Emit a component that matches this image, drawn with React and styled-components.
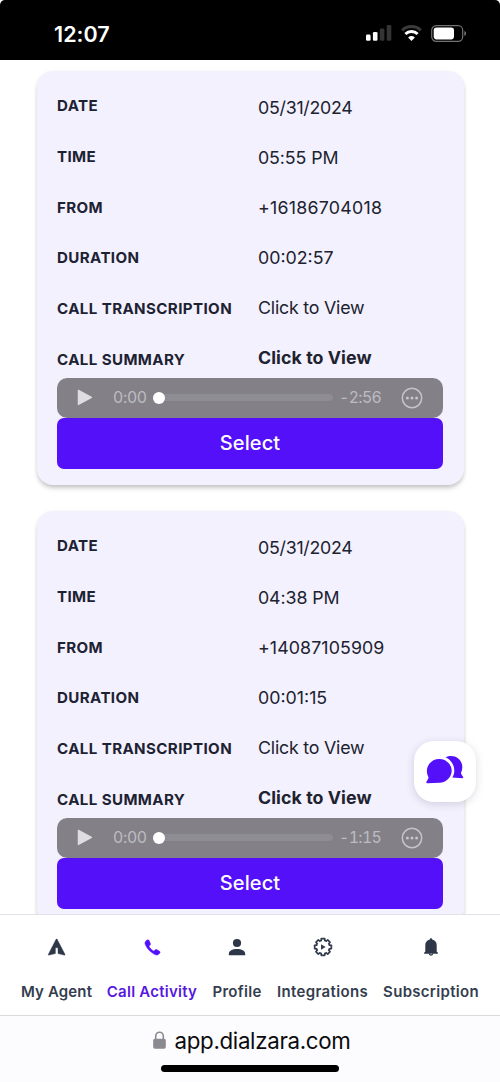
import React from 'react';
import styled, { createGlobalStyle } from 'styled-components';

const GlobalStyle = createGlobalStyle`
  * { box-sizing: border-box; }
  body { margin: 0; background: #fff; font-family: Inter, "Liberation Sans", sans-serif; }
  svg { display: block; overflow: visible; flex: none; }
`;

const Screen = styled.div`
  position: relative;
  width: 500px;
  height: 1082px;
  overflow: hidden;
  display: flex;
  flex-direction: column;
  background: #fff;
`;

const StatusBar = styled.header`
  flex: none;
  height: 60px;
  padding: 6px 33px 0 54px;
  display: flex;
  align-items: center;
  justify-content: space-between;
  background: #000;
  border-radius: 5px 5px 0 0;
  color: #fff;
`;

const Clock = styled.span`
  padding-top: 1px;
  font-size: 21.5px;
  font-weight: 600;
  line-height: 26px;
  letter-spacing: 0.05px;
`;

const StatusIcons = styled.div`
  display: flex;
  align-items: center;
  gap: 9px;
`;

const Feed = styled.main`
  flex: 1;
  min-height: 0;
  overflow: hidden;
  display: flex;
  flex-direction: column;
  gap: 26px;
  padding: 11px 36px 0 37px;
`;

const Card = styled.article`
  flex: none;
  height: 414px;
  padding: 9px 21px 0 20px;
  display: flex;
  flex-direction: column;
  border-radius: 16px;
  background: #f3f1fe;
  box-shadow: 0 4px 5px -1px rgba(0, 0, 0, 0.2), 0 1px 4px rgba(0, 0, 0, 0.07);
`;

const Details = styled.div`
  display: flex;
  height: 298px;
`;

const Labels = styled.div`
  width: 201px;
  padding-top: 0.4px;
  display: flex;
  flex-direction: column;
`;

const Label = styled.span`
  flex: none;
  height: 50.7px;
  line-height: 51px;
  font-size: 15.1px;
  font-weight: 650;
  letter-spacing: 0.4px;
  color: #1d2233;
  white-space: nowrap;
`;

const Values = styled.div`
  display: flex;
  flex-direction: column;
  padding-top: 3px;
`;

const Value = styled.span`
  flex: none;
  height: 50px;
  line-height: 50px;
  font-size: 17.8px;
  font-weight: ${(p) => (p.$strong ? 650 : 400)};
  letter-spacing: ${(p) => p.$tracking || '0px'};
  color: #20222f;
  white-space: nowrap;
`;

const Player = styled.div`
  flex: none;
  height: 39.5px;
  padding: 0 20px;
  display: flex;
  align-items: center;
  border-radius: 10px;
  background: #838187;
`;

const Time = styled.span`
  width: ${(p) => p.$width};
  margin-left: ${(p) => p.$gap};
  font-size: 15.8px;
  font-variant-numeric: tabular-nums;
  letter-spacing: ${(p) => p.$tracking || '-0.3px'};
  line-height: 20px;
  color: #bdbcc1;
  white-space: nowrap;
`;

const Track = styled.div`
  flex: none;
  width: 180px;
  height: 7px;
  margin-left: 6px;
  border-radius: 4px;
  background: #8f8d94;
  display: flex;
  align-items: center;
`;

const Knob = styled.div`
  width: 12px;
  height: 12px;
  border-radius: 50%;
  background: #fff;
`;

const SelectButton = styled.button`
  flex: none;
  height: 51px;
  padding: 0;
  border: 0;
  border-radius: 7px;
  background: #5510fa;
  color: #fff;
  font: 550 20px/51px Inter, "Liberation Sans", sans-serif;
  letter-spacing: 0.1px;
`;

const ChatButton = styled.button`
  position: absolute;
  left: 414px;
  top: 741px;
  width: 62px;
  height: 61px;
  padding: 0 0 3px;
  border: 0;
  border-radius: 20px;
  background: #fff;
  box-shadow: 0 2px 9px rgba(30, 20, 60, 0.16);
  display: flex;
  align-items: center;
  justify-content: center;
`;

const TabBar = styled.nav`
  flex: none;
  height: 101px;
  padding: 20px 0 0 21px;
  display: flex;
  gap: 15px;
  border-top: 1px solid #dfe2e7;
  background: #fff;
`;

const Tab = styled.a`
  flex: none;
  width: ${(p) => p.$width};
  display: flex;
  flex-direction: column;
  align-items: center;
  color: ${(p) => (p.$active ? '#5618e0' : '#343d4e')};
`;

const TabIcon = styled.span`
  height: 24px;
  display: flex;
  align-items: center;
`;

const TabLabel = styled.span`
  margin-top: 23px;
  font-size: 15px;
  font-weight: 580;
  line-height: 20px;
  letter-spacing: ${(p) => p.$tracking};
  white-space: nowrap;
`;

const AddressBar = styled.footer`
  flex: none;
  height: 67px;
  padding-top: 9px;
  display: flex;
  flex-direction: column;
  align-items: center;
  border-top: 1px solid #d9d9de;
  background: #fcfbfe;
`;

const Address = styled.div`
  display: flex;
  align-items: center;
  gap: 9px;
  height: 30px;
  padding-left: 3px;
  color: #0b0b0d;
  font-size: 22.3px;
  letter-spacing: -0.32px;
`;

const HomeIndicator = styled.div`
  width: 178px;
  height: 7px;
  margin-top: 10px;
  border-radius: 4px;
  background: #000;
`;

const SignalIcon = () => (
  <svg width="26" height="16" viewBox="0 0 26 16" fill="#fff">
    <rect x="0" y="9.6" width="4.6" height="6.2" rx="1.3" />
    <rect x="6.9" y="7" width="4.6" height="8.8" rx="1.3" />
    <g fill="#343434">
      <rect x="13.8" y="3.6" width="4.6" height="12.2" rx="1.3" />
      <rect x="20.7" y="0" width="4.6" height="15.8" rx="1.3" />
    </g>
  </svg>
);

const WifiIcon = () => (
  <svg width="21" height="16" viewBox="0 0 21 16" fill="none" strokeWidth="3">
    <path d="M1.2 5.3a13.4 13.4 0 0 1 18.6 0" stroke="#3b3b3b" />
    <path d="M4.4 9a8.7 8.7 0 0 1 12.2 0" stroke="#fff" />
    <path d="M7.1 12.5a5.2 5.2 0 0 1 6.8 0l-3.4 3.5z" fill="#fff" />
  </svg>
);

const BatteryIcon = () => (
  <svg width="36" height="17" viewBox="0 0 36 17">
    <rect x="0.7" y="0.7" width="31" height="15.6" rx="4.6" fill="none" stroke="#727272" strokeWidth="1.2" />
    <rect x="2.7" y="2.6" width="20.3" height="11.8" rx="2.8" fill="#fff" />
    <path d="M33.3 6v5c2.4-.7 2.4-4.3 0-5z" fill="#727272" />
  </svg>
);

const PlayIcon = () => (
  <svg width="16" height="17" viewBox="0 0 16 17">
    <path d="M1.4 1.3v14.2L14.4 8.4z" fill="#dedde1" stroke="#dedde1" strokeWidth="1.3" strokeLinejoin="round" />
  </svg>
);

const MoreIcon = styled(({ className }) => (
  <svg className={className} width="22" height="22" viewBox="0 0 22 22" fill="#c5c4c9">
    <circle cx="11" cy="11" r="9.7" fill="none" stroke="#c5c4c9" strokeWidth="1.5" />
    <circle cx="6.4" cy="11" r="1.5" />
    <circle cx="11" cy="11" r="1.5" />
    <circle cx="15.6" cy="11" r="1.5" />
  </svg>
))`
  margin-left: 19px;
`;

const ChatIcon = () => (
  <svg width="38" height="30" viewBox="0 0 38 30" fill="#5510fa">
    <path d="M13.2 4C6.4 4 .9 9.3.9 15.8c0 2.7.7 4.6 1.5 6.2.4.9-.3 2.2-1.8 4.5-.6 1-.3 1.9.8 1.8l12.2-.5c6.7-.3 12.1-5.5 12.1-12S20.1 4 13.2 4z" />
    <path d="M19.6 2.2c1.9-.9 3.4-1.3 5.4-1.3 6.3 0 11.3 4.8 11.3 11 0 2.2-.4 4-1.2 5.6-.4.9.1 1.9 1.7 3.9.8 1.1.5 1.9-.7 1.9l-9.8-.7c1.3-2.1 2-4.3 2-7 0-6-3.7-11.2-8.7-13.4z" />
  </svg>
);

const AgentIcon = () => (
  <svg width="18" height="18" viewBox="0 0 18 18">
    <path d="M8.2 1h.8l7.8 15c.5.9.1 1.4-.8 1.1l-6-1.5v-5.8H7.4v5.8l-6.1 1.5c-.9.3-1.3-.2-.8-1.1z" fill="#2e3748" stroke="#2e3748" strokeWidth=".4" />
  </svg>
);

const PhoneIcon = () => (
  <svg width="17" height="17" viewBox="0 0 17 17">
    <path d="M3.2 1C1 2.2.5 3.9 1.4 5.8c1.9 4.1 4.8 7.1 9 9.5 2.2 1.3 4.1.8 5.4-1.2.5-.8.3-1.5-.4-1.9l-2.5-1.5c-.7-.4-1.3-.3-1.8.2l-.9.8c-.4.3-.8.3-1.2 0-1.5-1-2.7-2.2-3.7-3.7-.3-.4-.3-.8.1-1.2l.7-.8c.5-.5.5-1.1.2-1.7L5.1 1.6C4.7.8 4 .6 3.2 1z" fill="#5510fa" stroke="#5510fa" strokeWidth=".5" />
  </svg>
);

const PersonIcon = () => (
  <svg width="18" height="18" viewBox="0 0 18 18" fill="#2e3748">
    <circle cx="9" cy="5" r="4.1" />
    <path d="M.8 17.2v-1.3c0-3.2 3.7-4.9 8.2-4.9s8.2 1.7 8.2 4.9v1.3z" />
  </svg>
);

const teeth = [0, 45, 90, 135, 180, 225, 270, 315];

const GearIcon = () => (
  <svg width="20" height="20" viewBox="0 0 20 20">
    <g fill="#343d4e">
      <circle cx="10" cy="10" r="7.8" />
      {teeth.map((angle) => (
        <rect key={angle} x="7.5" y="0.8" width="5" height="4" rx="0.8" transform={`rotate(${angle} 10 10)`} />
      ))}
    </g>
    <g fill="#fff">
      <circle cx="10" cy="10" r="5.9" />
      {teeth.map((angle) => (
        <rect key={angle} x="9" y="2.6" width="2" height="3" transform={`rotate(${angle} 10 10)`} />
      ))}
    </g>
    <path d="M8 7.2v5.6l4.7-2.8z" fill="#343d4e" />
  </svg>
);

const BellIcon = () => (
  <svg width="16" height="18" viewBox="0 0 16 18" fill="#2e3748">
    <path d="M8 .2c.7 0 1.1.5 1.2 1.2 2.8.6 4.5 2.6 4.5 5.6v6.5l1.2 1.3v.9H1.1v-.9l1.2-1.3V7c0-3 1.7-5 4.5-5.6C6.9.7 7.3.2 8 .2z" />
    <path d="M5.8 15.5h4.4c-.2 2.9-4.2 2.9-4.4 0z" />
    <path d="M7.1 15.8h1.8c-.2 1-1.6 1-1.8 0z" fill="#fff" />
  </svg>
);

const LockIcon = () => (
  <svg width="13" height="18" viewBox="0 0 13 18">
    <path d="M2.7 9V5.2a3.8 4 0 0 1 7.6 0V9" fill="none" stroke="#8b8a90" strokeWidth="1.6" />
    <rect x="0.2" y="7.7" width="12.6" height="10" rx="1.7" fill="#8b8a90" />
  </svg>
);

const calls = [
  { date: '05/31/2024', time: '05:55 PM', from: '+16186704018', duration: '00:02:57', remaining: '-2:56', tracking: '0.25px' },
  { date: '05/31/2024', time: '04:38 PM', from: '+14087105909', duration: '00:01:15', remaining: '-1:15', tracking: '0.1px' },
];

const tabs = [
  { label: 'My Agent', width: '71px', tracking: '0.15px', Icon: AgentIcon },
  { label: 'Call Activity', width: '90px', tracking: '0.25px', Icon: PhoneIcon, active: true },
  { label: 'Profile', width: '50px', tracking: '0.3px', Icon: PersonIcon },
  { label: 'Integrations', width: '91px', tracking: '0.35px', Icon: GearIcon },
  { label: 'Subscription', width: '96px', tracking: '0.3px', Icon: BellIcon },
];

const CallCard = ({ call }) => (
  <Card>
    <Details>
      <Labels>
        <Label>DATE</Label>
        <Label>TIME</Label>
        <Label>FROM</Label>
        <Label>DURATION</Label>
        <Label>CALL TRANSCRIPTION</Label>
        <Label>CALL SUMMARY</Label>
      </Labels>
      <Values>
        <Value $tracking="-0.26px">{call.date}</Value>
        <Value $tracking="-0.1px">{call.time}</Value>
        <Value $tracking={call.tracking}>{call.from}</Value>
        <Value>{call.duration}</Value>
        <Value $tracking="-0.2px">Click to View</Value>
        <Value $strong $tracking="0.06px">Click to View</Value>
      </Values>
    </Details>
    <Player>
      <PlayIcon />
      <Time $width="34px" $gap="20px">0:00</Time>
      <Track><Knob /></Track>
      <Time $width="43px" $gap="6px" $tracking="-0.6px">{call.remaining}</Time>
      <MoreIcon />
    </Player>
    <SelectButton>Select</SelectButton>
  </Card>
);

export default function App() {
  return (
    <Screen>
      <GlobalStyle />
      <StatusBar>
        <Clock>12:07</Clock>
        <StatusIcons>
          <SignalIcon />
          <WifiIcon />
          <BatteryIcon />
        </StatusIcons>
      </StatusBar>
      <Feed>
        {calls.map((call) => <CallCard key={call.from} call={call} />)}
      </Feed>
      <ChatButton aria-label="Chat"><ChatIcon /></ChatButton>
      <TabBar>
        {tabs.map(({ label, width, tracking, Icon, active }) => (
          <Tab key={label} $width={width} $active={active}>
            <TabIcon><Icon /></TabIcon>
            <TabLabel $tracking={tracking}>{label}</TabLabel>
          </Tab>
        ))}
      </TabBar>
      <AddressBar>
        <Address><LockIcon /><span>app.dialzara.com</span></Address>
        <HomeIndicator />
      </AddressBar>
    </Screen>
  );
}
